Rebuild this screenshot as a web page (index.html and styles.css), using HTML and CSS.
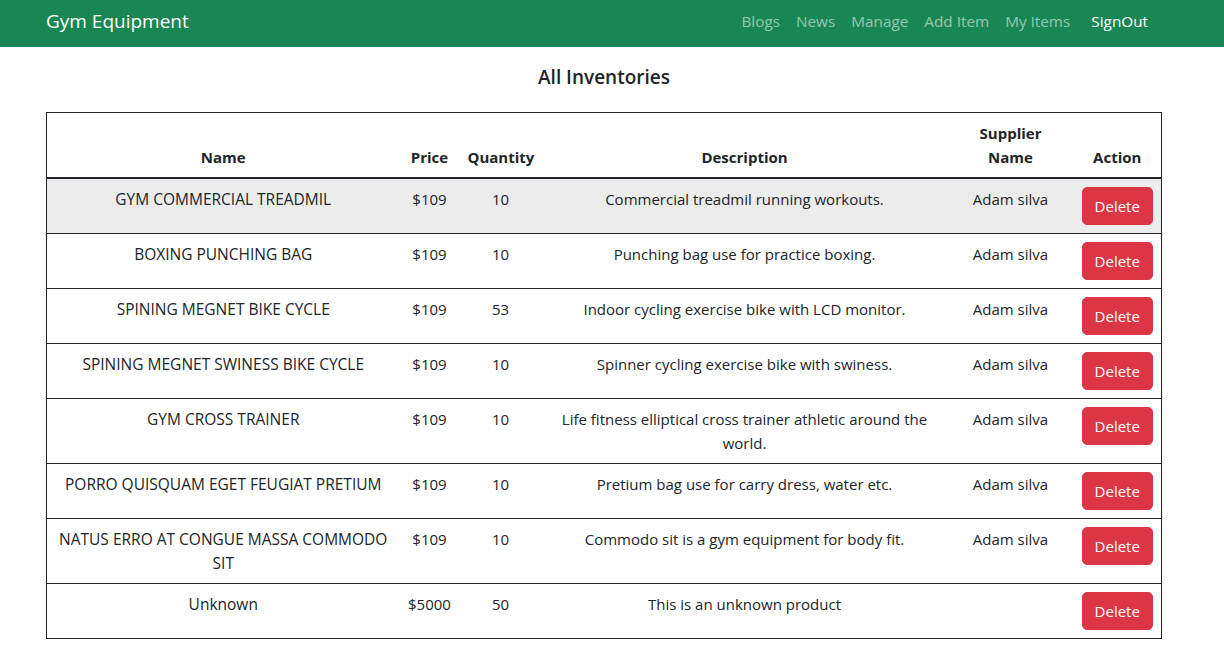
FILE: index.html
```html
<!DOCTYPE html>
<html lang="en">
<head>
<meta charset="utf-8">
<title>Gym Equipment</title>
<link rel="stylesheet" href="styles.css">
</head>
<body>
<nav class="navbar">
  <div class="container nav-inner">
    <a class="brand" href="#">Gym Equipment</a>
    <ul class="nav-links">
      <li><a href="#">Blogs</a></li>
      <li><a href="#">News</a></li>
      <li><a href="#">Manage</a></li>
      <li><a href="#">Add Item</a></li>
      <li><a href="#">My Items</a></li>
      <li><a class="signout" href="#">SignOut</a></li>
    </ul>
  </div>
</nav>
<main class="container">
  <h5 class="title">All Inventories</h5>
  <table class="inv">
    <colgroup>
      <col class="c-name"><col class="c-price"><col class="c-qty"><col class="c-desc"><col class="c-sup"><col class="c-act">
    </colgroup>
    <thead>
      <tr><th>Name</th><th>Price</th><th>Quantity</th><th>Description</th><th>Supplier Name</th><th>Action</th></tr>
    </thead>
    <tbody>
      <tr class="hover"><td>GYM COMMERCIAL TREADMIL</td><td>$109</td><td>10</td><td>Commercial treadmil running workouts.</td><td>Adam silva</td><td><button class="btn-del">Delete</button></td></tr>
      <tr><td>BOXING PUNCHING BAG</td><td>$109</td><td>10</td><td>Punching bag use for practice boxing.</td><td>Adam silva</td><td><button class="btn-del">Delete</button></td></tr>
      <tr><td>SPINING MEGNET BIKE CYCLE</td><td>$109</td><td>53</td><td>Indoor cycling exercise bike with LCD monitor.</td><td>Adam silva</td><td><button class="btn-del">Delete</button></td></tr>
      <tr><td>SPINING MEGNET SWINESS BIKE CYCLE</td><td>$109</td><td>10</td><td>Spinner cycling exercise bike with swiness.</td><td>Adam silva</td><td><button class="btn-del">Delete</button></td></tr>
      <tr><td>GYM CROSS TRAINER</td><td>$109</td><td>10</td><td>Life fitness elliptical cross trainer athletic around the world.</td><td>Adam silva</td><td><button class="btn-del">Delete</button></td></tr>
      <tr><td>PORRO QUISQUAM EGET FEUGIAT PRETIUM</td><td>$109</td><td>10</td><td>Pretium bag use for carry dress, water etc.</td><td>Adam silva</td><td><button class="btn-del">Delete</button></td></tr>
      <tr><td>NATUS ERRO AT CONGUE MASSA COMMODO SIT</td><td>$109</td><td>10</td><td>Commodo sit is a gym equipment for body fit.</td><td>Adam silva</td><td><button class="btn-del">Delete</button></td></tr>
      <tr><td>Unknown</td><td>$5000</td><td>50</td><td>This is an unknown product</td><td></td><td><button class="btn-del">Delete</button></td></tr>
    </tbody>
  </table>
</main>
</body>
</html>
```

FILE: styles.css
```css
* { box-sizing: border-box; }
html, body { margin: 0; padding: 0; }
body {
  font-family: "Open Sans", "Noto Sans", "Liberation Sans", sans-serif;
  font-size: 15px;
  line-height: 24px;
  color: #212529;
  background: #fff;
}
.container {
  width: 1140px;
  padding: 0 12px;
  margin-left: 34px;
}
.navbar {
  background: #198754;
  height: 47px;
}
.nav-inner {
  display: flex;
  align-items: center;
  justify-content: space-between;
  height: 42px;
}
.brand {
  color: #fff;
  text-decoration: none;
  font-size: 19px;
  line-height: 30px;
}
.nav-links {
  list-style: none;
  margin: 0;
  padding: 0;
  display: flex;
  align-items: center;
}
.nav-links a {
  display: block;
  padding: 0 8px;
  color: rgba(255, 255, 255, 0.55);
  text-decoration: none;
  font-size: 15.3px;
  line-height: 24px;
}
.nav-links a.signout {
  color: #fff;
  padding: 0 14px 0 13px;
}
.title {
  margin: 15px 0 20px;
  text-align: center;
  font-size: 19px;
  font-weight: 600;
  line-height: 30px;
}
.inv {
  width: 1115px;
  border-collapse: collapse;
  table-layout: fixed;
  border: 1px solid #212529;
  text-align: center;
}
.c-name { width: 353px; }
.c-price { width: 60px; }
.c-qty { width: 82px; }
.c-desc { width: 406px; }
.c-sup { width: 126px; }
.c-act { width: 88px; }
.inv th {
  font-weight: 700;
  vertical-align: bottom;
  padding: 8px;
}
.inv thead tr { border-bottom: 2px solid #212529; }
.inv td {
  vertical-align: top;
  padding: 8px;
}
.inv td:first-child { font-size: 15.5px; }
.inv tbody tr { border-bottom: 1px solid #212529; }
.inv tbody tr.hover { background: #ececec; }
.btn-del {
  font-family: inherit;
  font-size: 15px;
  line-height: 24px;
  color: #fff;
  background: #dc3545;
  border: 1px solid #dc3545;
  border-radius: 5px;
  padding: 6px 11px;
  width: 71px;
  cursor: pointer;
}
```
